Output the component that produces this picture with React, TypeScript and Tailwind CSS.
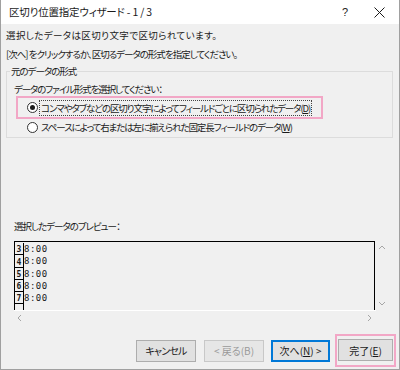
import React from "react";

const rows = ["3", "4", "5", "6", "7"];

function Radio({ checked }: { checked?: boolean }) {
  return (
    <span className="w-[11px] h-[11px] rounded-full border border-[#333333] bg-white flex items-center justify-center shrink-0">
      {checked && <span className="w-[5px] h-[5px] rounded-full bg-[#1a1a1a]" />}
    </span>
  );
}

function Chevron({ dir }: { dir: "up" | "down" | "left" | "right" }) {
  const d = {
    up: "M1 5 L4 2 L7 5",
    down: "M1 2 L4 5 L7 2",
    left: "M5 1 L2 4 L5 7",
    right: "M2 1 L5 4 L2 7",
  }[dir];
  return (
    <svg width="8" height="8" viewBox="0 0 8 8" className="text-[#a6a6a6]">
      <path d={d} fill="none" stroke="currentColor" strokeWidth={1} />
    </svg>
  );
}

export default function App() {
  return (
    <div className="w-[400px] h-[370px] overflow-hidden whitespace-nowrap bg-[#f0f0f0] border-x border-b border-[#a0a0a0] flex flex-col text-[9.5px] text-[#1a1a1a] font-['Noto_Sans_CJK_JP',sans-serif] [font-feature-settings:'palt']">
      {/* Title bar */}
      <div className="h-[24px] bg-white flex items-center shrink-0">
        <span className="pl-[8px] text-[10.5px] tracking-[-0.2px]">区切り位置指定ウィザード - 1 / 3</span>
        <span className="ml-auto mr-[26px] text-[11px] font-['Liberation_Sans',sans-serif]">?</span>
        <svg width="11" height="11" viewBox="0 0 11 11" className="mr-[14px]">
          <path d="M0.5 0.5 L10.5 10.5 M10.5 0.5 L0.5 10.5" stroke="#1a1a1a" strokeWidth={1} />
        </svg>
      </div>

      {/* Intro */}
      <div className="pl-[5px] mt-[2px] leading-[19px] tracking-[0.4px]">選択したデータは区切り文字で区切られています。</div>
      <div className="pl-[5px] leading-[19px] tracking-[-1px]">[次へ] をクリックするか、区切るデータの形式を指定してください。</div>

      {/* Group box */}
      <fieldset className="ml-[5px] mr-[6px] mt-[1px] h-[73px] border border-[#dcdcdc]">
        <legend className="ml-[3px] px-[1px] leading-[12px] tracking-[-1px]">元のデータの形式</legend>
        <div className="pl-[7px] leading-[14px] mt-[5px] tracking-[-1.1px]">データのファイル形式を選択してください：</div>
        <div className="ml-[9px] w-[307px] h-[23px] border-2 border-[#f2a7c6] flex items-center pl-[9px]">
          <Radio checked />
          <span className="ml-[2px] px-[1px] leading-[14px] tracking-[-1.1px] outline outline-1 outline-dotted outline-[#444444]">
            コンマやタブなどの区切り文字によってフィールドごとに区切られたデータ(<span className="underline">D</span>)
          </span>
        </div>
        <div className="ml-[20px] mt-[1px] flex items-center h-[14px]">
          <Radio />
          <span className="ml-[3px] leading-[14px] tracking-[-1.1px]">
            スペースによって右または左に揃えられた固定長フィールドのデータ(<span className="underline">W</span>)
          </span>
        </div>
      </fieldset>

      {/* Preview */}
      <div className="pl-[13px] mt-[81px] leading-[14px] tracking-[-1px]">選択したデータのプレビュー：</div>
      <div className="ml-[13px] mt-[8px] w-[375px] h-[84px] flex flex-col">
        <div className="flex flex-1 min-h-0">
          <div className="flex-1 border-t border-x border-black overflow-hidden flex flex-col pt-[1px]">
            {rows.map((n) => (
              <div key={n} className="flex h-[12.3px] shrink-0">
                <div className="w-[9px] shrink-0 border-r border-b border-black flex items-end justify-center text-[8px] leading-[9px] font-['DejaVu_Sans_Mono',monospace] font-bold">
                  {n}
                </div>
                <div className="text-[9px] leading-[12px] font-['DejaVu_Sans_Mono',monospace] tracking-[0.5px]">8:00</div>
              </div>
            ))}
            <div className="flex-1 w-[9px] border-r border-black" />
          </div>
          <div className="w-[14px] flex flex-col justify-between items-center pt-[3px] pb-[2px]">
            <Chevron dir="up" />
            <Chevron dir="down" />
          </div>
        </div>
        <div className="h-[15px] w-[362px] flex items-center justify-between px-[2px] border-t border-white">
          <Chevron dir="left" />
          <Chevron dir="right" />
        </div>
      </div>

      {/* Buttons */}
      <div className="mt-auto mb-[2px] flex items-center justify-end pr-[3px] text-[10px]">
        <button className="w-[60px] h-[22px] bg-[#e1e1e1] border border-[#adadad] tracking-[-0.8px]">キャンセル</button>
        <button className="ml-[8px] w-[60px] h-[22px] bg-[#e6e6e6] border border-[#c8c8c8] text-[#9a9a9a]">&lt; 戻る(B)</button>
        <button className="ml-[7px] w-[59px] h-[22px] bg-[#e1e1e1] border-2 border-[#0078d7]">
          次へ(<span className="underline">N</span>) &gt;
        </button>
        <div className="ml-[5px] border-2 border-[#f2a7c6] px-[1px] pt-[3px] pb-[4px]">
          <button className="w-[55px] h-[22px] bg-[#e1e1e1] border border-[#adadad]">
            完了(<span className="underline">E</span>)
          </button>
        </div>
      </div>
    </div>
  );
}
